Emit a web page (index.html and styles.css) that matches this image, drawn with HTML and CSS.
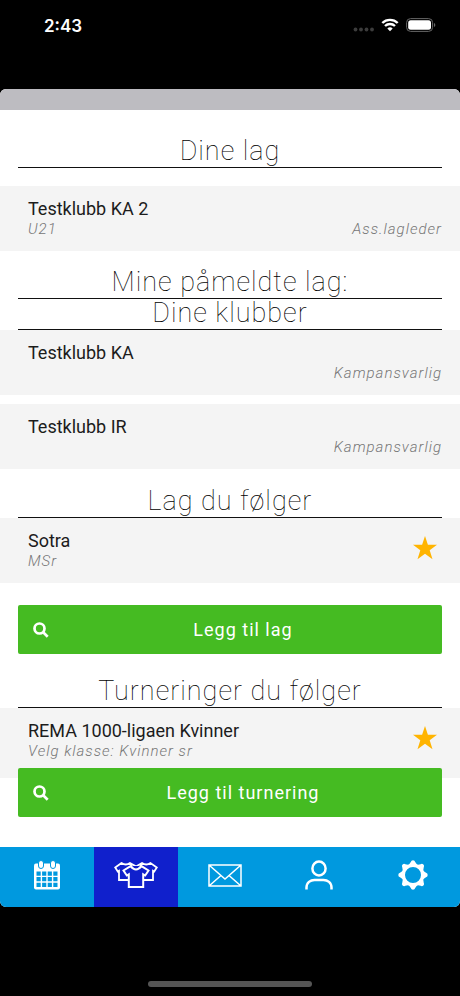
FILE: index.html
```html
<!DOCTYPE html>
<html lang="no">
<head>
<meta charset="utf-8">
<meta name="viewport" content="width=device-width, initial-scale=1">
<title>Dine lag</title>
<link rel="stylesheet" href="styles.css">
</head>
<body>
<div class="screen">
  <div class="status">
    <span class="time">2:43</span>
    <div class="indicators">
      <svg class="dots" width="22" height="14" viewBox="0 0 22 14"><circle cx="3.500" cy="11.500" r="1.900"/><circle cx="9" cy="11.500" r="1.900"/><circle cx="14.500" cy="11.500" r="1.900"/><circle cx="20" cy="11.500" r="1.900"/></svg>
      <svg class="wifi" width="18" height="14" viewBox="0 0 18 14"><path d="M1.300 5A11 11 0 0 1 16.700 5M4 8a7.200 7.200 0 0 1 10 0"/><path class="wifi-dot" d="M6.300 10.400a4 4 0 0 1 5.400 0L9 13.300z"/></svg>
      <svg class="battery" width="30" height="14" viewBox="0 0 30 14"><rect class="battery-case" x=".6" y=".6" width="26" height="12.800" rx="4"/><rect class="battery-fill" x="2.200" y="2.200" width="22.800" height="9.600" rx="2.500"/><path class="battery-tip" d="M28 5v4c1.800-.6 1.800-3.400 0-4z"/></svg>
    </div>
  </div>

  <div class="app">
    <div class="topbar"></div>
    <main class="content">
      <section class="own">
        <h2>Dine lag</h2>
        <ul class="list">
          <li class="row"><span class="name">Testklubb KA 2</span><div class="details"><span>U21</span><span>Ass.lagleder</span></div></li>
        </ul>
      </section>
      <section>
        <h2>Mine påmeldte lag:</h2>
      </section>
      <section>
        <h2>Dine klubber</h2>
        <ul class="list">
          <li class="row"><span class="name">Testklubb KA</span><div class="details"><span></span><span>Kampansvarlig</span></div></li>
          <li class="row"><span class="name">Testklubb IR</span><div class="details"><span></span><span>Kampansvarlig</span></div></li>
        </ul>
      </section>
      <section class="follow">
        <h2>Lag du følger</h2>
        <ul class="list">
          <li class="row starred">
            <div><span class="name">Sotra</span><div class="details"><span>MSr</span></div></div>
            <button class="star" aria-label="Sotra"><svg width="24" height="24" viewBox="0 0 24 24"><path d="M12 0l2.900 8.700H24l-7.300 5.500 2.800 9L12 17.800 4.500 23.200l2.800-9L0 8.700h9.100z"/></svg></button>
          </li>
        </ul>
        <button class="add"><svg width="16" height="16" viewBox="0 0 16 16"><circle cx="6.500" cy="6.500" r="5"/><path d="M10.200 10.200l4.500 4.500"/></svg><span>Legg til lag</span></button>
      </section>
      <section class="tournaments">
        <h2>Turneringer du følger</h2>
        <ul class="list">
          <li class="row starred">
            <div><span class="name">REMA 1000-ligaen Kvinner</span><div class="details"><span>Velg klasse: Kvinner sr</span></div></div>
            <button class="star" aria-label="REMA 1000-ligaen Kvinner"><svg width="24" height="24" viewBox="0 0 24 24"><path d="M12 0l2.900 8.700H24l-7.300 5.500 2.800 9L12 17.800 4.500 23.200l2.800-9L0 8.700h9.100z"/></svg></button>
          </li>
        </ul>
        <button class="add"><svg width="16" height="16" viewBox="0 0 16 16"><circle cx="6.500" cy="6.500" r="5"/><path d="M10.200 10.200l4.500 4.500"/></svg><span>Legg til turnering</span></button>
      </section>
    </main>
    <nav class="tabs">
      <a href="#" aria-label="Kalender"><svg width="26" height="30" viewBox="0 0 26 30"><rect class="solid" x="0" y="3.500" width="26" height="26" rx="2"/><path class="cell" d="M2.500 11.500h4.200v4.200H2.500zM8.100 11.500h4.200v4.200H8.100zM13.700 11.500h4.200v4.200h-4.200zM19.300 11.500h4.200v4.200h-4.200zM2.500 17.100h4.200v4.200H2.500zM8.100 17.100h4.200v4.200H8.100zM13.700 17.100h4.200v4.200h-4.200zM19.300 17.100h4.200v4.200h-4.200zM2.500 22.700h4.200v4.200H2.500zM8.100 22.700h4.200v4.200H8.100zM13.700 22.700h4.200v4.200h-4.200zM19.300 22.700h4.200v4.200h-4.200z"/><rect class="ring" x="4.500" y=".5" width="5" height="8" rx="2.500"/><rect class="ring" x="16.500" y=".5" width="5" height="8" rx="2.500"/></svg></a>
      <a href="#" class="active" aria-label="Lag" aria-current="page"><svg width="44" height="28" viewBox="0 0 44 28"><path class="back" d="M7.500 2L1.200 6.500l2.600 4L5 9.800V19h15V9.500l1.500.5L23 6l-7-4q-4.200 3-8.500 0zM28 2L21 6l2 4 1-.5V19h15V9.800l1.200.7 2.600-4L36.500 2q-4.200 3-8.500 0z"/><path class="front" d="M17 4.800L9.500 9.500l3.300 5 2-1.200V26h14.400V13.300l2 1.200 3.300-5L27 4.800q-5 4.500-10 0z"/><path class="front" d="M16.500 5q5.500 6.800 11 0"/></svg></a>
      <a href="#" aria-label="Meldinger"><svg width="34" height="23" viewBox="0 0 34 23"><path d="M1 1h32v21H1zM1 1l16 14L33 1M1 22l12-10.500M33 22L21 11.500"/></svg></a>
      <a href="#" aria-label="Profil"><svg class="person" width="28" height="30" viewBox="0 0 28 30"><ellipse cx="14" cy="8.500" rx="6.600" ry="7"/><path d="M1.500 29.500v-2c0-5 4-7.500 8-7.500h9c4 0 8 2.500 8 7.500v2"/></svg></a>
      <a href="#" aria-label="Innstillinger"><svg width="30" height="30" viewBox="-15 -15 30 30"><circle class="gear" r="9.600"/><g class="solid"><path id="tooth" d="M-4.500-9.800l2.300-3.200q.4-1.700 2.200-1.700t2.200 1.700l2.300 3.200z"/><use href="#tooth" transform="rotate(45)"/><use href="#tooth" transform="rotate(90)"/><use href="#tooth" transform="rotate(135)"/><use href="#tooth" transform="rotate(180)"/><use href="#tooth" transform="rotate(225)"/><use href="#tooth" transform="rotate(270)"/><use href="#tooth" transform="rotate(315)"/></g></svg></a>
    </nav>
  </div>
  <div class="home"></div>
</div>
</body>
</html>
```

FILE: styles.css
```css
* { box-sizing: border-box; }
body {
  margin: 0;
  background: #000;
  color: #1c1c1c;
  font-family: Roboto, "Liberation Sans", sans-serif;
}
svg { display: block; }
.screen {
  min-height: 100vh;
  display: flex;
  flex-direction: column;
}
.status {
  display: flex;
  justify-content: space-between;
  align-items: flex-start;
  padding: 14px 24px 51px 44px;
  color: #fff;
}
.time {
  font: 600 17px/24px Inter, sans-serif;
}
.indicators {
  display: flex;
  align-items: center;
  gap: 7px;
  height: 22px;
}
.dots { fill: #3c3c3c; }
.wifi { fill: none; stroke: #fff; stroke-width: 2.4; }
.wifi-dot { fill: #fff; stroke: none; }
.battery-case { fill: none; stroke: #666; }
.battery-fill { fill: #fff; }
.battery-tip { fill: #666; }

.app {
  display: flex;
  flex-direction: column;
  overflow: hidden;
  border-radius: 6px;
  background: #fff;
}
.topbar { height: 21px; background: #bdbcc1; }
.content { padding: 27px 0 30px; }
h2 {
  margin: 0 18px;
  padding-bottom: 2px;
  border-bottom: 1px solid #111;
  color: #000;
  font-size: 27px;
  font-weight: 100;
  line-height: 28px;
  letter-spacing: 1px;
  text-align: center;
}
.list {
  display: flex;
  flex-direction: column;
  gap: 9px;
  margin: 0;
  padding: 0;
  list-style: none;
}
.own { padding-bottom: 17px; }
.own .list { margin-top: 18px; }
.row {
  padding: 12px 18px 13px 28px;
  background: #f4f4f4;
}
.name {
  display: block;
  font-size: 18px;
  line-height: 22px;
}
.details {
  display: flex;
  justify-content: space-between;
  min-height: 18px;
  color: #777;
  font-size: 15px;
  font-style: italic;
  font-weight: 300;
  line-height: 18px;
  letter-spacing: 1px;
}
.starred {
  display: flex;
  justify-content: space-between;
  align-items: flex-start;
}
.star {
  margin: 6px 5px 0 0;
  padding: 0;
  border: 0;
  background: none;
  fill: #ffb400;
}
.follow { padding: 18px 0 23px; }
.add {
  position: relative;
  display: flex;
  align-items: center;
  width: calc(100% - 36px);
  height: 49px;
  margin: 22px 18px 0;
  padding: 0 15px;
  border: 0;
  border-radius: 2px;
  background: #45bb22;
  color: #fff;
  font: 400 18px/24px Roboto, "Liberation Sans", sans-serif;
  letter-spacing: 1px;
}
.add svg { fill: none; stroke: #fff; stroke-width: 2.7; }
.add span { flex: 1; padding-left: 10px; }
.tournaments .row { padding-bottom: 18px; }
.tournaments .add { margin-top: -10px; }

.tabs {
  display: flex;
  background: #0099df;
}
.tabs a {
  flex: 94;
  display: flex;
  justify-content: center;
  align-items: center;
  height: 60px;
  padding-bottom: 4px;
}
.tabs .active { flex: 84; background: #1020cc; }
.tabs svg { fill: none; stroke: #fff; stroke-width: 1.5; }
.tabs .solid { fill: #fff; stroke: none; }
.tabs .cell { fill: #0099df; stroke: none; }
.tabs .ring { fill: #fff; stroke: #0099df; stroke-width: 1; }
.tabs .person { stroke-width: 2.5; }
.tabs .gear { stroke-width: 3.2; }
.tabs .back { stroke-width: 1.8; }
.tabs .front { fill: #1020cc; stroke-width: 2; }

.home {
  width: 164px;
  height: 6px;
  margin: auto auto 9px;
  border-radius: 3px;
  background: #555;
}
```
